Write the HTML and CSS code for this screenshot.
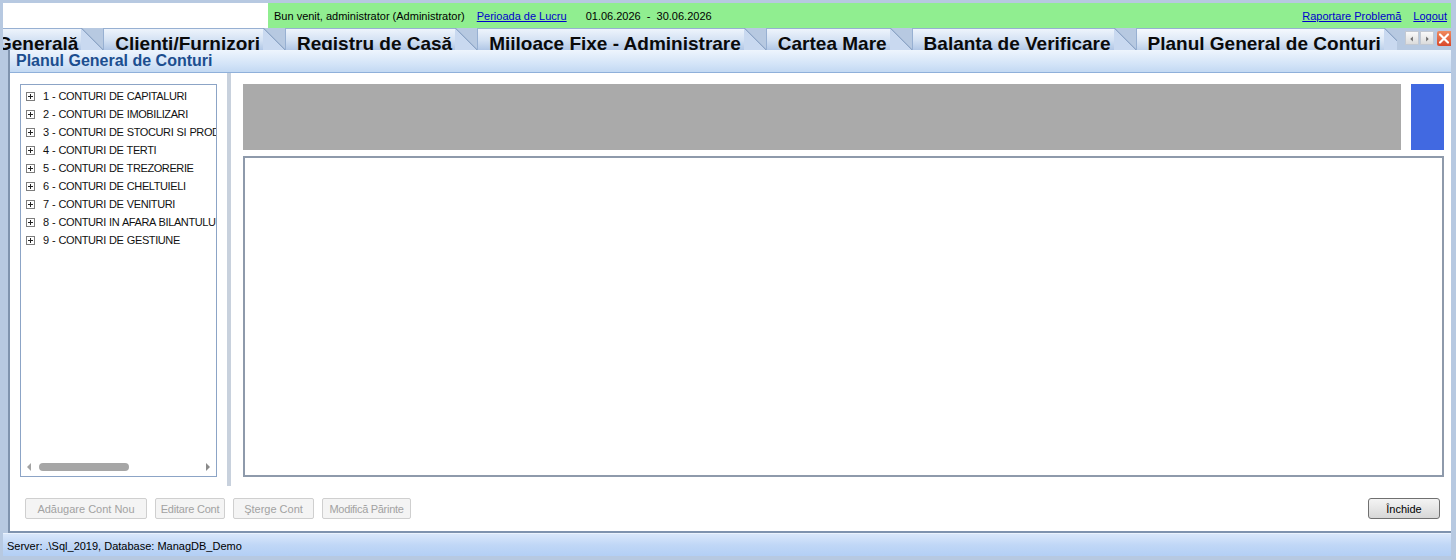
FILE: index.html
```html
<!DOCTYPE html>
<html lang="ro">
<head>
  <meta charset="UTF-8">
  <title>Planul General de Conturi</title>
  <link rel="stylesheet" href="styles.css">
</head>
<body>
  <div class="app">
    <div class="topbar">
      <div class="logo-box"></div>
      <div class="greeting">
        <span>Bun venit, administrator (Administrator)</span>
        <a href="#" class="period-link">Perioada de Lucru</a>
        <span class="dates">01.06.2026&nbsp; - &nbsp;30.06.2026</span>
        <span class="spacer"></span>
        <a href="#">Raportare Problemă</a>
        <a href="#" class="logout">Logout</a>
      </div>
    </div>

    <div class="tabstrip">
      <div class="tabs">
        <div class="tab"><span class="tab-text">Generală</span><span class="tab-edge"></span></div>
        <div class="tab"><span class="tab-text">Clienti/Furnizori</span><span class="tab-edge"></span></div>
        <div class="tab"><span class="tab-text">Registru de Casă</span><span class="tab-edge"></span></div>
        <div class="tab"><span class="tab-text">Mijloace Fixe - Administrare</span><span class="tab-edge"></span></div>
        <div class="tab"><span class="tab-text">Cartea Mare</span><span class="tab-edge"></span></div>
        <div class="tab"><span class="tab-text">Balanta de Verificare</span><span class="tab-edge"></span></div>
        <div class="tab active"><span class="tab-text">Planul General de Conturi</span><span class="tab-edge"></span></div>
      </div>
      <div class="tab-nav">
        <span class="nav-btn"><svg width="14" height="14" viewBox="0 0 14 14"><path d="M5 7 L8 4 L8 10 Z" fill="#6d6d6d"/></svg></span>
        <span class="nav-btn"><svg width="14" height="14" viewBox="0 0 14 14"><path d="M9 7 L6 4 L6 10 Z" fill="#6d6d6d"/></svg></span>
        <span class="close-btn"><svg width="14" height="15" viewBox="0 0 14 15"><path d="M3 3.5 L11 11.5 M11 3.5 L3 11.5" stroke="#fff" stroke-width="2.2" stroke-linecap="round"/></svg></span>
      </div>
    </div>

    <div class="window">
      <div class="window-title">Planul General de Conturi</div>
      <div class="window-body">
        <div class="main">
          <div class="tree-pane">
            <div class="tree">
              <ul class="tree-list">
                <li><span class="plus"></span>1 - CONTURI DE CAPITALURI</li>
                <li><span class="plus"></span>2 - CONTURI DE IMOBILIZARI</li>
                <li><span class="plus"></span>3 - CONTURI DE STOCURI SI PRODUCTIE IN CURS</li>
                <li><span class="plus"></span>4 - CONTURI DE TERTI</li>
                <li><span class="plus"></span>5 - CONTURI DE TREZORERIE</li>
                <li><span class="plus"></span>6 - CONTURI DE CHELTUIELI</li>
                <li><span class="plus"></span>7 - CONTURI DE VENITURI</li>
                <li><span class="plus"></span>8 - CONTURI IN AFARA BILANTULUI</li>
                <li><span class="plus"></span>9 - CONTURI DE GESTIUNE</li>
              </ul>
              <div class="hscroll">
                <svg width="8" height="10" viewBox="0 0 8 10"><path d="M6 1 L2 5 L6 9 Z" fill="#a3a3a3"/></svg>
                <span class="thumb-track"><span class="thumb"></span></span>
                <svg width="8" height="10" viewBox="0 0 8 10"><path d="M2 1 L6 5 L2 9 Z" fill="#8a8a8a"/></svg>
              </div>
            </div>
          </div>
          <div class="splitter"></div>
          <div class="content-pane">
            <div class="header-row">
              <div class="gray-bar"></div>
              <div class="blue-block"></div>
            </div>
            <div class="detail-box"></div>
          </div>
        </div>
        <div class="actions">
          <button class="btn btn-add" disabled>Adăugare Cont Nou</button>
          <button class="btn btn-edit" disabled>Editare Cont</button>
          <button class="btn btn-del" disabled>Şterge Cont</button>
          <button class="btn btn-parent" disabled>Modifică Părinte</button>
          <span class="spacer"></span>
          <button class="btn btn-close">Închide</button>
        </div>
      </div>
    </div>

    <div class="statusbar">Server: .\Sql_2019, Database: ManagDB_Demo</div>
  </div>
</body>
</html>
```

FILE: styles.css
```css
body {
  margin: 0;
  background: #b7c9e1;
  font-family: "Liberation Sans", Arial, sans-serif;
  font-size: 11px;
  color: #000;
}
.app {
  height: 560px;
  padding: 3px 5px 0 3px;
  box-sizing: border-box;
  display: flex;
  flex-direction: column;
  overflow: hidden;
}

/* top bar */
.topbar {
  display: flex;
  height: 25px;
}
.logo-box {
  width: 265px;
  background: #fff;
}
.greeting {
  flex: 1;
  background: #90ee90;
  display: flex;
  align-items: center;
  padding: 0 4px 0 6px;
  white-space: nowrap;
}
.greeting a {
  color: #0000cc;
}
.period-link {
  margin-left: 12px;
}
.dates {
  margin-left: 19px;
}
.logout {
  margin-left: 12px;
}
.spacer {
  flex: 1;
}

/* tabs */
.tabstrip {
  display: flex;
  height: 22px;
  background: #b7c9e1;
}
.tabs {
  flex: 1;
  display: flex;
  overflow: hidden;
}
.tab {
  display: flex;
  flex-shrink: 0;
  height: 22px;
}
.tab:first-child {
  margin-left: -18px;
}
.tab-text {
  padding: 0 3px 0 11px;
  background: linear-gradient(#eef4fc, #d3e1f3 55%, #b1c7e6);
  border-top: 1px solid #97b0d2;
  border-left: 1px solid #97b0d2;
  font-size: 19px;
  font-weight: bold;
  line-height: 29px;
  height: 21px;
  overflow: hidden;
  color: #0a0a0a;
  white-space: nowrap;
}
.tab-edge {
  width: 22px;
  height: 22px;
  background: linear-gradient(to top right, #c9d9f0 49%, #8ea6c7 50%, #b7c9e1 54%);
}
.tab.active .tab-text {
  background: linear-gradient(#f5f9fe, #dde8f6 55%, #bcd0ea);
}
.tab-nav {
  display: flex;
  align-items: flex-start;
  padding: 3px 0 0 8px;
  gap: 1px;
}
.nav-btn {
  width: 14px;
  height: 14px;
  background: linear-gradient(#fafafa, #dcdcdc);
  border: 1px solid #c3c9d2;
  box-sizing: border-box;
  display: flex;
}
.close-btn {
  margin-left: 2px;
  width: 14px;
  height: 15px;
  background: linear-gradient(#f08a5e, #d9482a);
  border-radius: 2px 0 0 2px;
  display: flex;
}

/* window */
.window {
  margin-left: 5px;
  flex: 0 0 auto;
  background: #fff;
  border-left: 2px solid #7f93ae;
  border-bottom: 2px solid #7f93ae;
  display: flex;
  flex-direction: column;
}
.window-title {
  height: 23px;
  box-sizing: border-box;
  background: linear-gradient(#eef5fd, #d5e5f8 60%, #c3d9f3);
  border-bottom: 1px solid #8fb0da;
  color: #1c4e8f;
  font-size: 16px;
  font-weight: bold;
  line-height: 21px;
  padding-left: 6px;
}
.window-body {
  display: flex;
  flex-direction: column;
}
.main {
  display: flex;
  height: 413px;
}
.tree-pane {
  padding: 11px 10px 9px 10px;
}
.tree {
  width: 197px;
  height: 393px;
  box-sizing: border-box;
  border: 1px solid #8ca4c6;
  display: flex;
  flex-direction: column;
  overflow: hidden;
}
.tree-list {
  list-style: none;
  margin: 0;
  padding: 2px 0 0 5px;
  flex: 1;
}
.tree-list li {
  height: 18px;
  line-height: 18px;
  white-space: nowrap;
  letter-spacing: -0.4px;
  word-spacing: 0.6px;
  color: #111;
  display: flex;
  align-items: center;
}
.plus {
  position: relative;
  width: 9px;
  height: 9px;
  box-sizing: border-box;
  border: 1px solid #7d7d7d;
  margin-right: 8px;
  flex-shrink: 0;
  background: #fff;
}
.plus::before,
.plus::after {
  content: "";
  position: absolute;
  background: #222;
}
.plus::before {
  left: 1px;
  top: 3px;
  width: 5px;
  height: 1px;
}
.plus::after {
  left: 3px;
  top: 1px;
  width: 1px;
  height: 5px;
}
.hscroll {
  height: 14px;
  margin-bottom: 2px;
  display: flex;
  align-items: center;
  padding: 0 4px;
  gap: 2px;
}
.thumb-track {
  flex: 1;
  display: flex;
}
.thumb {
  width: 90px;
  height: 8px;
  margin-left: 4px;
  border-radius: 4px;
  background: #a6a6a6;
}
.splitter {
  width: 4px;
  background: #c8d1dd;
}
.content-pane {
  flex: 1;
  padding: 11px 7px 9px 12px;
  display: flex;
  flex-direction: column;
}
.header-row {
  display: flex;
  height: 66px;
  gap: 10px;
}
.gray-bar {
  flex: 1;
  background: #aaaaaa;
}
.blue-block {
  width: 33px;
  background: #4169e1;
}
.detail-box {
  flex: 1;
  margin-top: 6px;
  border: 2px solid #8e9aab;
}

/* buttons */
.actions {
  display: flex;
  padding: 12px 11px 12px 15px;
  gap: 8px;
}
.btn {
  height: 21px;
  font-family: "Liberation Sans", Arial, sans-serif;
  font-size: 11px;
  padding: 0;
  background: #f4f4f4;
  border: 1px solid #cfcfcf;
  border-radius: 2px;
  color: #a2a2a2;
  white-space: nowrap;
}
.btn-add {
  width: 122px;
}
.btn-edit {
  width: 70px;
  letter-spacing: -0.2px;
}
.btn-del {
  width: 81px;
}
.btn-parent {
  width: 89px;
  letter-spacing: -0.3px;
}
.btn-close {
  width: 72px;
  color: #000;
  border: 1px solid #707070;
  border-radius: 3px;
  background: linear-gradient(#f4f4f4, #e6e6e6 50%, #d7d7d7);
}

/* status */
.statusbar {
  height: 23px;
  line-height: 24px;
  padding-left: 4px;
  background: linear-gradient(#d9e7fb, #c0d7f6 50%, #b3cff5);
  border-top: 1px solid #eaf2fd;
  box-sizing: border-box;
}
```
